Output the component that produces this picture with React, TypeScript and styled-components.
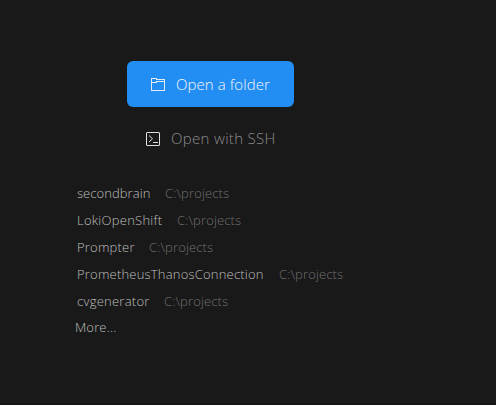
import React from "react";
import styled, { createGlobalStyle } from "styled-components";

const GlobalStyle = createGlobalStyle`
  * { box-sizing: border-box; }
  body { margin: 0; background: #191919; }
`;

const Page = styled.main`
  width: 496px;
  height: 405px;
  padding: 61px 0 0 75px;
  overflow: hidden;
  background: #191919;
  border-bottom: 2px solid #181317;
  font-family: "Open Sans", "Noto Sans", sans-serif;
  font-weight: 330;
`;

const Actions = styled.div`
  display: flex;
  flex-direction: column;
  gap: 16px;
  width: 167px;
  margin-left: 52px;
`;

const Action = styled.button<{ $primary?: boolean }>`
  display: flex;
  align-items: center;
  gap: 10px;
  width: 167px;
  height: ${(p) => (p.$primary ? 46 : 32)}px;
  padding: 0 0 0 ${(p) => (p.$primary ? 23 : 18)}px;
  border: 0;
  border-radius: 6px;
  background: ${(p) => (p.$primary ? "#228df2" : "transparent")};
  color: ${(p) => (p.$primary ? "#f6f6f6" : "#8c8c8c")};
  font: inherit;
  font-size: 15px;
  line-height: 20px;
  white-space: nowrap;
`;

const Icon = styled.svg`
  flex: none;
  width: 16px;
  height: 16px;
  fill: none;
`;

const Label = styled.span<{ $spacing: number; $raised?: boolean }>`
  letter-spacing: ${(p) => p.$spacing}px;
  padding-bottom: ${(p) => (p.$raised ? 2 : 0)}px;
`;

const Projects = styled.ul`
  margin: 24px 0 0;
  padding: 0 0 0 2px;
  list-style: none;
`;

const Project = styled.li`
  display: flex;
  align-items: center;
  gap: 14px;
  height: 27px;
  font-size: 13px;
  line-height: 18px;
  white-space: nowrap;
`;

const Name = styled.span<{ $width: number; $spacing: number }>`
  width: ${(p) => p.$width}px;
  color: #bebebe;
  letter-spacing: ${(p) => p.$spacing}px;
`;

const Path = styled.span`
  color: #707070;
  letter-spacing: 0.15px;
`;

const More = styled.div`
  height: 26px;
  color: #bebebe;
  font-size: 13px;
  line-height: 26px;
  letter-spacing: 0.15px;
`;

const projects = [
  { name: "secondbrain", width: 74, spacing: 0.06 },
  { name: "LokiOpenShift", width: 86, spacing: 0.26 },
  { name: "Prompter", width: 58, spacing: 0.2 },
  { name: "PrometheusThanosConnection", width: 188, spacing: 0.2 },
  { name: "cvgenerator", width: 73, spacing: 0.25 },
];

export default function App() {
  return (
    <>
      <GlobalStyle />
      <Page>
        <Actions>
          <Action $primary>
            <Icon viewBox="0 0 16 16" stroke="#e6eaef" shapeRendering="crispEdges">
              <path d="M1.5 2.5h5v1h8v11h-13zM1.5 6.5h5v-1h8" />
            </Icon>
            <Label $spacing={0.08}>Open a folder</Label>
          </Action>
          <Action>
            <Icon viewBox="0 0 16 16" stroke="#dedede">
              <rect x="1.5" y="1.5" width="13" height="13" rx=".5" />
              <path d="m4 4.5 3.5 3.25L4 11M8 11.5h5" />
            </Icon>
            <Label $spacing={0.32} $raised>Open with SSH</Label>
          </Action>
        </Actions>
        <Projects>
          {projects.map((p) => (
            <Project key={p.name}>
              <Name $width={p.width} $spacing={p.spacing}>{p.name}</Name>
              <Path>C:\projects</Path>
            </Project>
          ))}
        </Projects>
        <More>More...</More>
      </Page>
    </>
  );
}
